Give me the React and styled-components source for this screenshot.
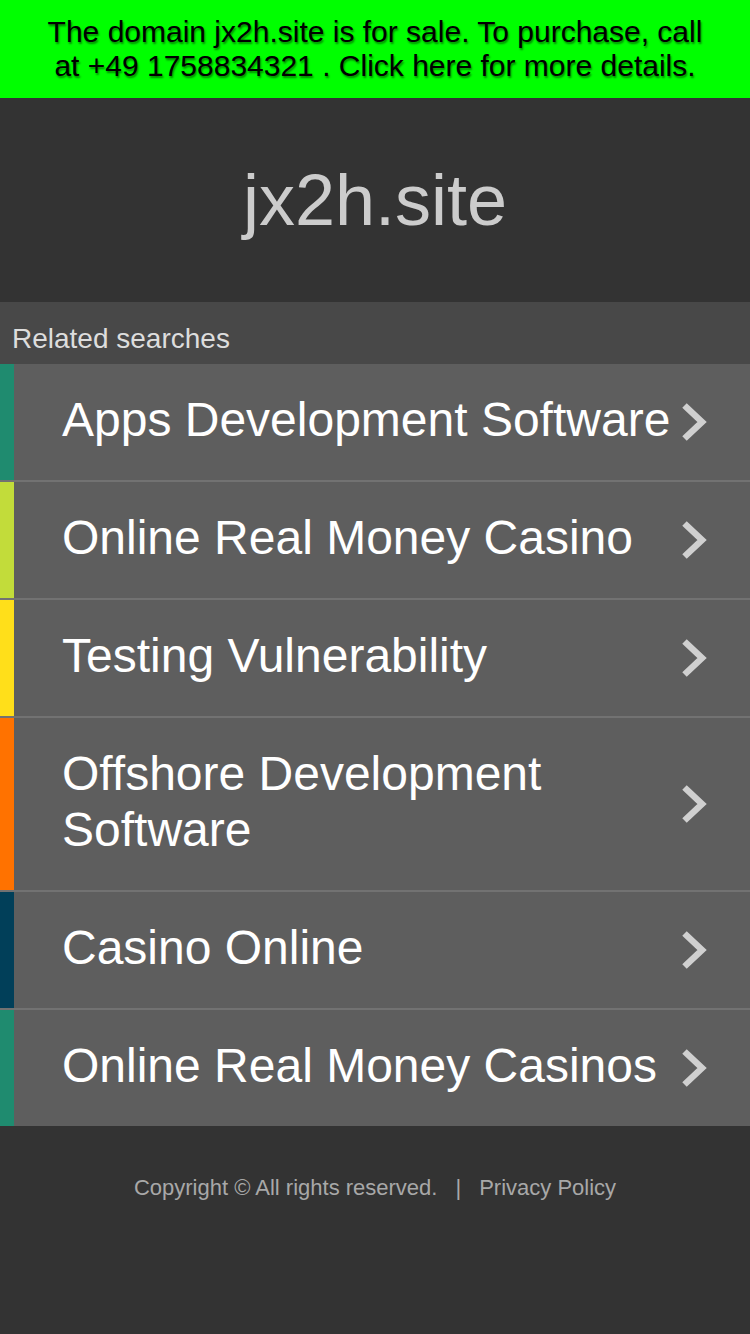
import React from 'react'
import styled, { createGlobalStyle } from 'styled-components'

const searches = [
  { label: 'Apps Development Software', color: '#1f8b6f' },
  { label: 'Online Real Money Casino', color: '#c2dc3a' },
  { label: 'Testing Vulnerability', color: '#ffdf1a' },
  { label: 'Offshore Development Software', color: '#ff7200' },
  { label: 'Casino Online', color: '#013f59' },
  { label: 'Online Real Money Casinos', color: '#1f8b6f' },
]

const Chevron = () => (
  <ChevronIcon viewBox="0 0 26 38" aria-hidden="true">
    <polyline points="2.5,2.5 20,19 2.5,35.5" fill="none" stroke="#d0d0d0" strokeWidth="6.5" strokeLinejoin="miter" />
  </ChevronIcon>
)

const App = () => {
  return (
    <Page>
      <GlobalStyle />
      <SaleBanner>
        The domain jx2h.site is for sale. To purchase, call at +49 1758834321 . Click here for more details.
      </SaleBanner>
      <Header>
        <Title>jx2h.site</Title>
      </Header>
      <RelatedBar>Related searches</RelatedBar>
      <List>
        {searches.map((item) => (
          <Row key={item.label}>
            <Stripe $color={item.color} />
            <RowBody>
              <RowText>{item.label}</RowText>
              <Chevron />
            </RowBody>
          </Row>
        ))}
      </List>
      <Footer>
        <span>Copyright © All rights reserved.</span>
        <Pipe>|</Pipe>
        <span>Privacy Policy</span>
      </Footer>
    </Page>
  )
}

export default App

const GlobalStyle = createGlobalStyle`
  html, body {
    margin: 0;
    padding: 0;
    background: #333333;
  }
  body {
    font-family: "Liberation Sans", Arial, sans-serif;
  }
`

const Page = styled.div`
  width: 750px;
  min-height: 1334px;
  background: #333333;
`

const SaleBanner = styled.div`
  background: #00ff00;
  color: #000;
  font-size: 30px;
  line-height: 34px;
  text-align: center;
  padding: 15px 40px 15px;
  text-shadow: 1px 2px 2px rgba(0, 0, 0, 0.45);
`

const Header = styled.div`
  height: 204px;
  display: flex;
  align-items: center;
  justify-content: center;
  background: #333333;
`

const Title = styled.h1`
  margin: 0;
  font-size: 72px;
  font-weight: normal;
  color: #cccccc;
`

const RelatedBar = styled.div`
  background: #484848;
  color: #dddddd;
  font-size: 28px;
  line-height: 32px;
  padding: 21px 12px 9px;
`

const List = styled.div`
  display: flex;
  flex-direction: column;
`

const Row = styled.div`
  display: flex;
  background: #5e5e5e;

  & + & {
    border-top: 2px solid #727272;
  }
`

const Stripe = styled.div`
  width: 14px;
  flex-shrink: 0;
  background: ${(p) => p.$color};
`

const RowBody = styled.div`
  flex: 1;
  display: flex;
  align-items: center;
  gap: 9px;
  padding: 30px 42px 30px 48px;
`

const RowText = styled.div`
  flex: 1;
  color: #ffffff;
  font-size: 48px;
  line-height: 56px;
  position: relative;
  top: -2px;
`

const ChevronIcon = styled.svg`
  width: 26px;
  height: 38px;
  flex-shrink: 0;
`

const Footer = styled.div`
  display: flex;
  justify-content: center;
  padding-top: 49px;
  color: #a8a8a8;
  font-size: 22px;
  line-height: 25px;
`

const Pipe = styled.span`
  margin: 0 18px;
`
